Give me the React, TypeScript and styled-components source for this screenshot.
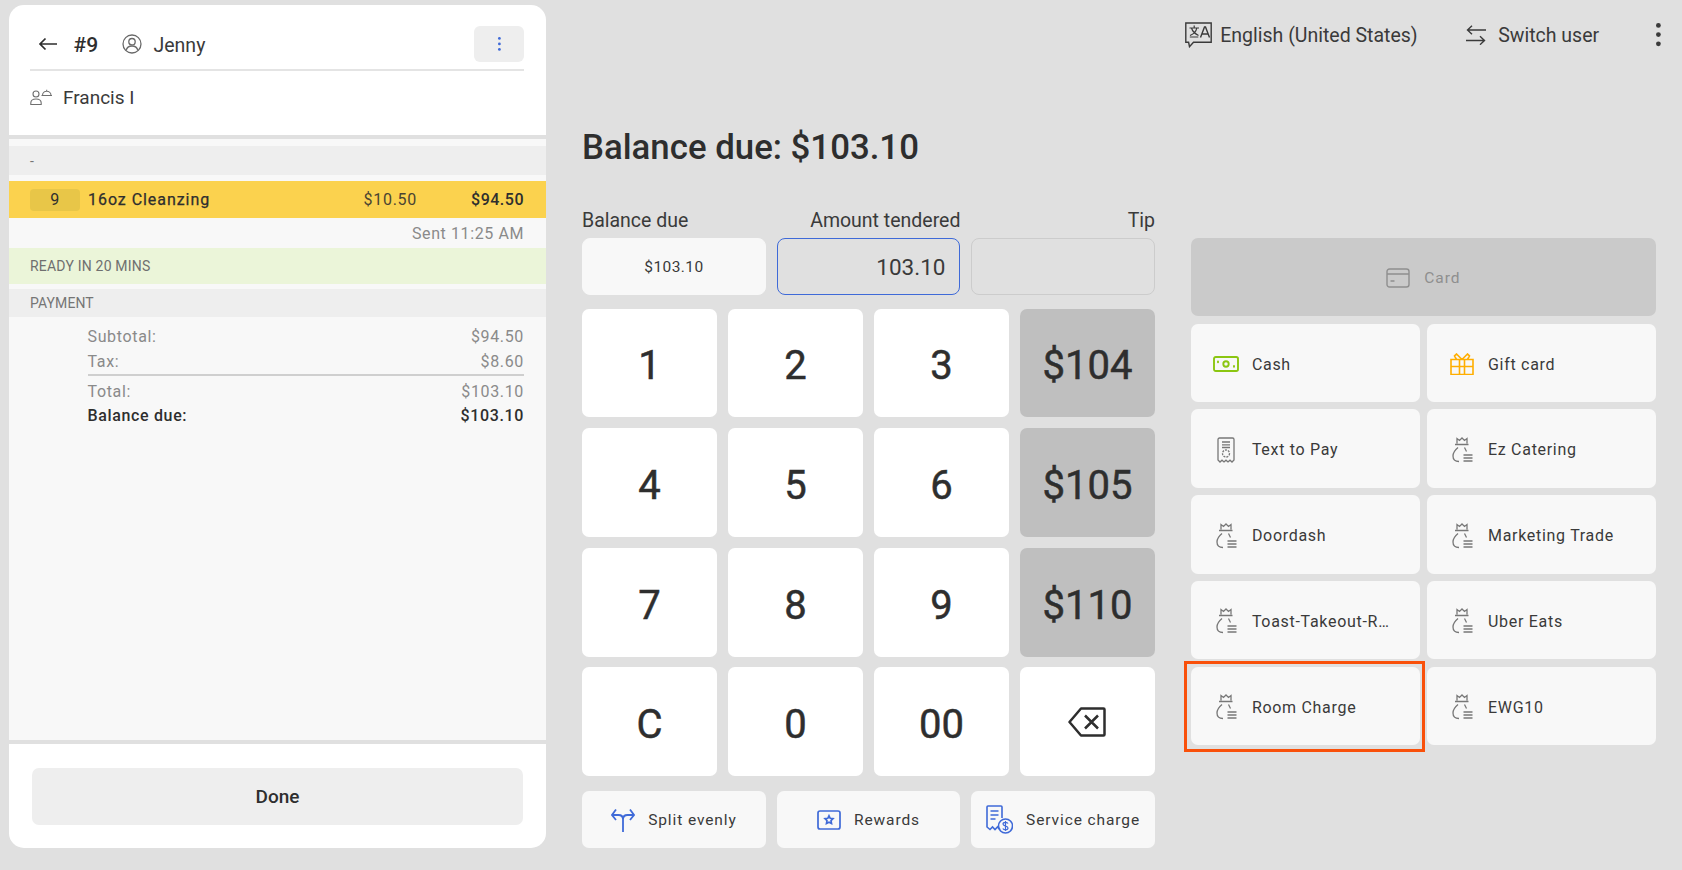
import * as React from 'react';
import styled, { createGlobalStyle } from 'styled-components';

const GlobalStyle = createGlobalStyle`
  html, body {
    margin: 0;
    padding: 0;
    background: #e0e0e0;
  }
  * {
    box-sizing: border-box;
  }
  body {
    font-family: Roboto, "Liberation Sans", sans-serif;
    color: #2e2e2e;
  }
`;

const Page = styled.div`
  display: flex;
  width: 1682px;
  height: 870px;
  overflow: hidden;
  background: #e0e0e0;
`;

/* Left ticket panel */
const Panel = styled.aside`
  display: flex;
  flex-direction: column;
  flex: none;
  width: 537px;
  height: 843px;
  margin: 5px 0 0 9px;
  background: #fff;
  border-radius: 15px;
  overflow: hidden;
`;

const PanelHeader = styled.header`
  padding: 22px 22px 0 21px;
  border-bottom: 4px solid #e0e0e0;
`;

const HeaderRow = styled.div`
  display: flex;
  align-items: center;
  height: 44px;
  padding-bottom: 8px;
  border-bottom: 2px solid #e4e4e4;
`;

const BackButton = styled.span`
  display: flex;
  width: 43.5px;
  padding-left: 8px;
`;

const OrderNumber = styled.span`
  width: 48px;
  padding-top: 2px;
  font-size: 21px;
  font-weight: 500;
`;

const ServerName = styled.span`
  margin-left: 12px;
  padding-top: 2px;
  font-size: 19.5px;
  color: #3a3a3a;
`;

const MoreButton = styled.span`
  display: flex;
  align-items: center;
  justify-content: center;
  width: 50px;
  height: 36px;
  margin-left: auto;
  background: #eeeeee;
  border-radius: 6px;
`;

const CustomerRow = styled.div`
  display: flex;
  align-items: center;
  gap: 11px;
  height: 64px;
  padding-bottom: 12px;
  font-size: 19px;
  color: #3a3a3a;
`;

const PanelBody = styled.div`
  flex: 1;
  padding-top: 7px;
  background: #f8f8f8;
`;

const SectionBand = styled.div<{ $height: number; $gap: number }>`
  display: flex;
  align-items: center;
  height: ${props => props.$height}px;
  margin-bottom: ${props => props.$gap}px;
  padding-left: 21px;
  background: #eeeeee;
  font-size: 14px;
  letter-spacing: 0.1px;
  color: #757575;
`;

const ItemRow = styled.div`
  display: flex;
  align-items: center;
  height: 37px;
  padding: 0 22px 0 21px;
  background: #fbd24e;
  font-size: 16px;
  letter-spacing: 0.7px;
`;

const Quantity = styled.span`
  display: flex;
  align-items: center;
  justify-content: center;
  width: 50px;
  height: 22px;
  margin-right: 8px;
  background: #e8c648;
  border-radius: 4px;
`;

const ItemName = styled.span`
  flex: 1;
  letter-spacing: 0.95px;
  -webkit-text-stroke: 0.25px #2e2e2e;
`;

const UnitPrice = styled.span`
  color: #4a4432;
`;

const ItemTotal = styled.span`
  width: 107px;
  text-align: right;
  font-weight: 500;
  letter-spacing: 0.5px;
`;

const SentRow = styled.div`
  display: flex;
  align-items: center;
  justify-content: flex-end;
  height: 30px;
  padding: 1px 22px 0 0;
  font-size: 16px;
  letter-spacing: 0.6px;
  color: #8a8a8a;
`;

const ReadyBand = styled.div`
  display: flex;
  align-items: center;
  height: 36px;
  margin-bottom: 4.7px;
  padding-left: 21px;
  background: #ebf5d9;
  font-size: 14px;
  letter-spacing: 0.2px;
  color: #6f6f6f;
`;

const Totals = styled.div`
  padding: 7.5px 22px 0 78.5px;
`;

const TotalRow = styled.div<{ $strong?: boolean }>`
  display: flex;
  align-items: center;
  justify-content: space-between;
  height: 24.4px;
  font-size: 16px;
  letter-spacing: 0.65px;
  font-weight: ${props => (props.$strong ? 500 : 400)};
  color: ${props => (props.$strong ? '#2e2e2e' : '#8a8a8a')};
`;

const TotalsRule = styled.hr`
  height: 2px;
  margin: 1px 0 3px;
  border: 0;
  background: #cfcfcf;
`;

const PanelFooter = styled.footer`
  padding: 23.7px 23px 23px 23px;
  border-top: 4px solid #e0e0e0;
`;

const DoneButton = styled.div`
  display: flex;
  align-items: center;
  justify-content: center;
  height: 57.5px;
  background: #eeeeee;
  border-radius: 7px;
  font-size: 19px;
  font-weight: 500;
`;

/* Right side */
const Main = styled.main`
  display: flex;
  flex-direction: column;
  flex: 1;
  padding-left: 36px;
`;

const TopBar = styled.div`
  display: flex;
  align-items: center;
  justify-content: flex-end;
  height: 70px;
  padding-right: 20.5px;
  font-size: 19.5px;
  color: #3a3a3a;
`;

const TopItem = styled.span<{ $width: number; $gap: number }>`
  display: flex;
  align-items: center;
  gap: ${props => props.$gap}px;
  width: ${props => props.$width}px;
`;

const Columns = styled.div`
  display: flex;
  gap: 35.7px;
`;

const TenderColumn = styled.section`
  flex: none;
  width: 573px;
`;

const Heading = styled.h1`
  height: 44px;
  margin: 55px 0 40px;
  font-size: 34.8px;
  line-height: 44px;
  font-weight: 500;
`;

const ThreeGrid = styled.div`
  display: grid;
  grid-template-columns: repeat(3, 1fr);
  column-gap: 10.7px;
`;

const FieldLabel = styled.span<{ $right?: boolean }>`
  height: 29px;
  font-size: 19.5px;
  line-height: 24px;
  color: #3a3a3a;
  text-align: ${props => (props.$right ? 'right' : 'left')};
`;

const FieldBox = styled.div<{ $variant: 'due' | 'active' | 'empty' }>`
  display: flex;
  align-items: center;
  justify-content: ${props => (props.$variant === 'due' ? 'center' : 'flex-end')};
  height: 57px;
  padding-right: 14px;
  padding-left: ${props => (props.$variant === 'due' ? '14px' : '0')};
  border-radius: 8px;
  font-size: ${props => (props.$variant === 'due' ? '15.5px' : '22.5px')};
  letter-spacing: ${props => (props.$variant === 'due' ? '0.4px' : '0')};
  color: #3a3a3a;
  background: ${props => (props.$variant === 'due' ? '#f8f8f8' : '#e0e0e0')};
  border: 1px solid
    ${props =>
      props.$variant === 'active'
        ? '#3f6ad8'
        : props.$variant === 'empty'
          ? '#cccccc'
          : '#f8f8f8'};
`;

const Keypad = styled.div`
  display: grid;
  grid-template-columns: repeat(4, 1fr);
  grid-template-rows: repeat(4, 1fr);
  gap: 10.8px;
  height: 467.7px;
  margin: 13.5px 0 15px;
`;

const Key = styled.div<{ $preset?: boolean }>`
  display: flex;
  align-items: center;
  justify-content: center;
  padding-top: 6px;
  border-radius: 7px;
  font-size: 40px;
  color: #2e2e2e;
  -webkit-text-stroke: 0.5px #2e2e2e;
  background: ${props => (props.$preset ? '#bfbfbf' : '#ffffff')};
`;

const ActionButton = styled.div`
  display: flex;
  align-items: center;
  justify-content: center;
  gap: 13px;
  height: 57.3px;
  background: #f8f8f8;
  border-radius: 7px;
  font-size: 15.5px;
  letter-spacing: 0.9px;
  white-space: nowrap;
  color: #3a3a3a;
`;

const TenderTypes = styled.section`
  flex: none;
  width: 465.3px;
  margin-top: 168px;
`;

const CardButton = styled.div`
  display: flex;
  align-items: center;
  justify-content: center;
  gap: 14px;
  height: 78px;
  margin-bottom: 7.7px;
  padding-top: 1px;
  background: #cacaca;
  border-radius: 7px;
  font-size: 15.5px;
  letter-spacing: 1px;
  color: #8f8f8f;
`;

const TypeGrid = styled.div`
  display: grid;
  grid-template-columns: repeat(2, 1fr);
  gap: 7.4px 7px;
`;

const TypeButton = styled.div<{ $highlighted?: boolean }>`
  position: relative;
  display: flex;
  align-items: center;
  height: 78.4px;
  padding: 2.5px 0 0 22.5px;
  background: #f8f8f8;
  border-radius: 7px;
  font-size: 16px;
  letter-spacing: 0.7px;
  color: #3a3a3a;

  ${props =>
    props.$highlighted
      ? `&::after {
    content: '';
    position: absolute;
    inset: -6px -5px -6.7px -6.7px;
    border: 3.4px solid #f9500a;
  }`
      : ''}
`;

const TypeIcon = styled.span`
  display: flex;
  align-items: center;
  justify-content: center;
  flex: none;
  width: 26px;
  margin-right: 12.7px;
`;

const TypeLabel = styled.span`
  white-space: nowrap;
`;

/* Icons */
const BLUE = '#3f6ad8';

const BackIcon = () => (
  <svg width="19" height="14" viewBox="0 0 19 14" fill="none" stroke="#2e2e2e" strokeWidth="1.7">
    <path d="M19 7H2M7.5 1.5 2 7l5.5 5.5" />
  </svg>
);

const UserIcon = () => (
  <svg width="20" height="20" viewBox="0 0 20 20" fill="none" stroke="#6a6a6a" strokeWidth="1.3">
    <circle cx="10" cy="10" r="9" />
    <circle cx="10" cy="7.7" r="3.2" />
    <path d="M4.2 16.4c.6-3 3-4.4 5.8-4.4s5.200 1.400 5.800 4.400" />
  </svg>
);

const DotsIcon = ({ color, r, gap }: { color: string; r: number; gap: number }) => (
  <svg width={r * 2 + 2} height={gap * 2 + r * 2 + 2} fill={color}>
    <circle cx={r + 1} cy={r + 1} r={r} />
    <circle cx={r + 1} cy={r + 1 + gap} r={r} />
    <circle cx={r + 1} cy={r + 1 + gap * 2} r={r} />
  </svg>
);

const GuestIcon = () => (
  <svg width="22" height="16" viewBox="0 0 22 16" fill="none" stroke="#6f6f6f" strokeWidth="1.1">
    <circle cx="6" cy="5" r="3" />
    <path d="M.8 15.500v-1.500C.8 11.500 3 10 6 10s5.200 1.500 5.200 4v1.500z" />
    <path d="M12.500 6.500c0-2.600 2-4.200 4.200-4.200s4.300 1.600 4.300 4.200zM11.500 6.500h10.500M16.700 2.300V.8" />
  </svg>
);

const TranslateIcon = () => (
  <svg width="27" height="26" viewBox="0 0 27 26" fill="none" stroke="#3a3a3a" strokeWidth="1.4">
    <path d="M.8 1h25.400v19.300H8.500l-4 4.400-.9-4.400H.8z" />
    <path d="M4.500 6h9.500M9.200 3.500V6M11.800 6c-.6 3.300-3 6-6.800 7.500M6.500 6c.8 3 3.200 5.500 7 7.500M4.800 15h8.500" strokeWidth="1.2" />
    <path d="M15.500 15.500 19.500 5h1l4 10.500M17 12h6" />
  </svg>
);

const SwitchIcon = () => (
  <svg width="20" height="20" viewBox="0 0 20 20" fill="none" stroke="#3a3a3a" strokeWidth="1.4">
    <path d="M20 5H1.500M6 .8 1.500 5 6 9.200" />
    <path d="M0 15.500h18.500M14 11.300l4.500 4.200-4.500 4.200" />
  </svg>
);

const BackspaceIcon = () => (
  <svg width="38" height="30" viewBox="0 0 38 30" fill="none" stroke="#2e2e2e" strokeWidth="2.500" strokeLinejoin="round" style={{ marginTop: -6 }}>
    <path d="M13 1.500h22.500a1 1 0 0 1 1 1v25a1 1 0 0 1-1 1H13L1.500 15z" />
    <path d="m17 8.500 13 13M30 8.500l-13 13" />
  </svg>
);

const SplitIcon = () => (
  <svg width="24" height="24" viewBox="0 0 24 24" fill="none" stroke={BLUE} strokeWidth="1.800">
    <path d="M12 24V11.500c0-3-2-4.500-4.500-4.500H1M12 11.500c0-3 2-4.500 4.500-4.500H23" />
    <path d="M5 1.500 1 7l4 5M19 1.500 23 7l-4 5" />
  </svg>
);

const RewardsIcon = () => (
  <svg width="24" height="20" viewBox="0 0 24 20" fill="none" stroke={BLUE} strokeWidth="1.700">
    <rect x="1" y="1" width="22" height="18" rx="2" />
    <path d="m12 5.800 1.200 2.500 2.800.4-2 2 .5 2.800-2.500-1.300-2.500 1.300.5-2.800-2-2 2.800-.4z" />
  </svg>
);

const ServiceIcon = () => (
  <svg width="27" height="29" viewBox="0 0 27 29" fill="none" stroke={BLUE} strokeWidth="1.600">
    <path d="M14 24.500 11.500 22 9 24.500 6.500 22 4 24.500 1 22V2a1 1 0 0 1 1-1h13a1 1 0 0 1 1 1v11" />
    <path d="M4.500 6h8M4.500 10h8M4.500 14h5" />
    <circle cx="19.500" cy="21" r="7" />
    <path d="M22 18.500c-.5-1-1.500-1.200-2.500-1.200s-2.500.5-2.500 1.800c0 2.600 5 1.300 5 3.900 0 1.300-1.300 1.800-2.500 1.800s-2.200-.5-2.700-1.300M19.500 16v10" strokeWidth="1.200" />
  </svg>
);

const CardIcon = () => (
  <svg width="24" height="20" viewBox="0 0 24 20" fill="none" stroke="#8f8f8f" strokeWidth="1.400">
    <rect x="1" y="1" width="22" height="18" rx="2.500" />
    <path d="M1 6h22M4.500 13h4" />
  </svg>
);

const CashIcon = () => (
  <svg width="26" height="16" viewBox="0 0 26 16" fill="none" stroke="#8bc611" strokeWidth="1.900">
    <rect x="1" y="1" width="24" height="14" rx="1.800" />
    <circle cx="13" cy="8" r="2.700" />
    <path d="M5 5.500v.8M21 10v.8" strokeLinecap="round" />
  </svg>
);

const GiftIcon = () => (
  <svg width="24" height="22" viewBox="0 0 24 22" fill="none" stroke="#ffae00" strokeWidth="1.600">
    <path d="M1 6.500h22v15H1zM1 13.500h22M9.500 6.500v15M14.500 6.500v15" />
    <path d="M12 6.500 6.500 1 4.500 3l2 3.500M12 6.500 17.500 1l2 2-2 3.500" />
  </svg>
);

const ReceiptIcon = () => (
  <svg width="18" height="26" viewBox="0 0 18 26" fill="none" stroke="#777777" strokeWidth="1.300">
    <path d="M1 2.500A1.500 1.500 0 0 1 2.500 1h13A1.500 1.500 0 0 1 17 2.500V23l-2 2-2-1.800-2 1.800-2-1.800L7 25l-2-1.800L3 25l-2-2z" />
    <path d="M5 5h8M5 7.800h8M5 10.500h8" />
    <circle cx="9" cy="16.500" r="3.500" strokeDasharray="2 1" />
  </svg>
);

const BagIcon = () => (
  <svg width="21" height="26" viewBox="0 0 21 26" fill="none" stroke="#777777" strokeWidth="1.300">
    <path d="M5 6.500V1.500l2.500 2L10 1l2.500 2.500 2.500-2v5M3 7.500h13.500" />
    <path d="M6 10.500C3 13 1 16 1 19c0 3.500 2.500 5.500 6 5.500" />
    <path d="m12.500 10.500 2 4" />
    <path d="M11.500 18h9M11.500 21h9M11.500 24h9" />
  </svg>
);

const tenderTypes = [
  { label: 'Cash', icon: <CashIcon /> },
  { label: 'Gift card', icon: <GiftIcon /> },
  { label: 'Text to Pay', icon: <ReceiptIcon /> },
  { label: 'Ez Catering', icon: <BagIcon /> },
  { label: 'Doordash', icon: <BagIcon /> },
  { label: 'Marketing Trade', icon: <BagIcon /> },
  { label: 'Toast-Takeout-R…', icon: <BagIcon /> },
  { label: 'Uber Eats', icon: <BagIcon /> },
  { label: 'Room Charge', icon: <BagIcon />, highlighted: true },
  { label: 'EWG10', icon: <BagIcon /> },
];

const keys = ['1', '2', '3', '$104', '4', '5', '6', '$105', '7', '8', '9', '$110', 'C', '0', '00'];

const App = () => (
  <Page>
    <GlobalStyle />
    <Panel>
      <PanelHeader>
        <HeaderRow>
          <BackButton>
            <BackIcon />
          </BackButton>
          <OrderNumber>#9</OrderNumber>
          <UserIcon />
          <ServerName>Jenny</ServerName>
          <MoreButton>
            <DotsIcon color={BLUE} r={1.4} gap={5.5} />
          </MoreButton>
        </HeaderRow>
        <CustomerRow>
          <GuestIcon />
          Francis I
        </CustomerRow>
      </PanelHeader>
      <PanelBody>
        <SectionBand $height={29} $gap={6}>-</SectionBand>
        <ItemRow>
          <Quantity>9</Quantity>
          <ItemName>16oz Cleanzing</ItemName>
          <UnitPrice>$10.50</UnitPrice>
          <ItemTotal>$94.50</ItemTotal>
        </ItemRow>
        <SentRow>Sent 11:25 AM</SentRow>
        <ReadyBand>READY IN 20 MINS</ReadyBand>
        <SectionBand $height={28.3} $gap={0}>PAYMENT</SectionBand>
        <Totals>
          <TotalRow>
            <span>Subtotal:</span>
            <span>$94.50</span>
          </TotalRow>
          <TotalRow>
            <span>Tax:</span>
            <span>$8.60</span>
          </TotalRow>
          <TotalsRule />
          <TotalRow>
            <span>Total:</span>
            <span>$103.10</span>
          </TotalRow>
          <TotalRow $strong>
            <span>Balance due:</span>
            <span>$103.10</span>
          </TotalRow>
        </Totals>
      </PanelBody>
      <PanelFooter>
        <DoneButton>Done</DoneButton>
      </PanelFooter>
    </Panel>

    <Main>
      <TopBar>
        <TopItem $width={281.5} $gap={8.5}>
          <TranslateIcon />
          English (United States)
        </TopItem>
        <TopItem $width={188.5} $gap={12}>
          <SwitchIcon />
          Switch user
        </TopItem>
        <DotsIcon color="#3a3a3a" r={2.4} gap={9.2} />
      </TopBar>
      <Columns>
        <TenderColumn>
          <Heading>Balance due: $103.10</Heading>
          <ThreeGrid>
            <FieldLabel>Balance due</FieldLabel>
            <FieldLabel $right>Amount tendered</FieldLabel>
            <FieldLabel $right>Tip</FieldLabel>
            <FieldBox $variant="due">$103.10</FieldBox>
            <FieldBox $variant="active">103.10</FieldBox>
            <FieldBox $variant="empty" />
          </ThreeGrid>
          <Keypad>
            {keys.map(key => (
              <Key key={key} $preset={key.startsWith('$')}>
                {key}
              </Key>
            ))}
            <Key>
              <BackspaceIcon />
            </Key>
          </Keypad>
          <ThreeGrid>
            <ActionButton>
              <SplitIcon />
              Split evenly
            </ActionButton>
            <ActionButton>
              <RewardsIcon />
              Rewards
            </ActionButton>
            <ActionButton>
              <ServiceIcon />
              Service charge
            </ActionButton>
          </ThreeGrid>
        </TenderColumn>
        <TenderTypes>
          <CardButton>
            <CardIcon />
            Card
          </CardButton>
          <TypeGrid>
            {tenderTypes.map(type => (
              <TypeButton key={type.label} $highlighted={type.highlighted}>
                <TypeIcon>{type.icon}</TypeIcon>
                <TypeLabel>{type.label}</TypeLabel>
              </TypeButton>
            ))}
          </TypeGrid>
        </TenderTypes>
      </Columns>
    </Main>
  </Page>
);

export default App;
